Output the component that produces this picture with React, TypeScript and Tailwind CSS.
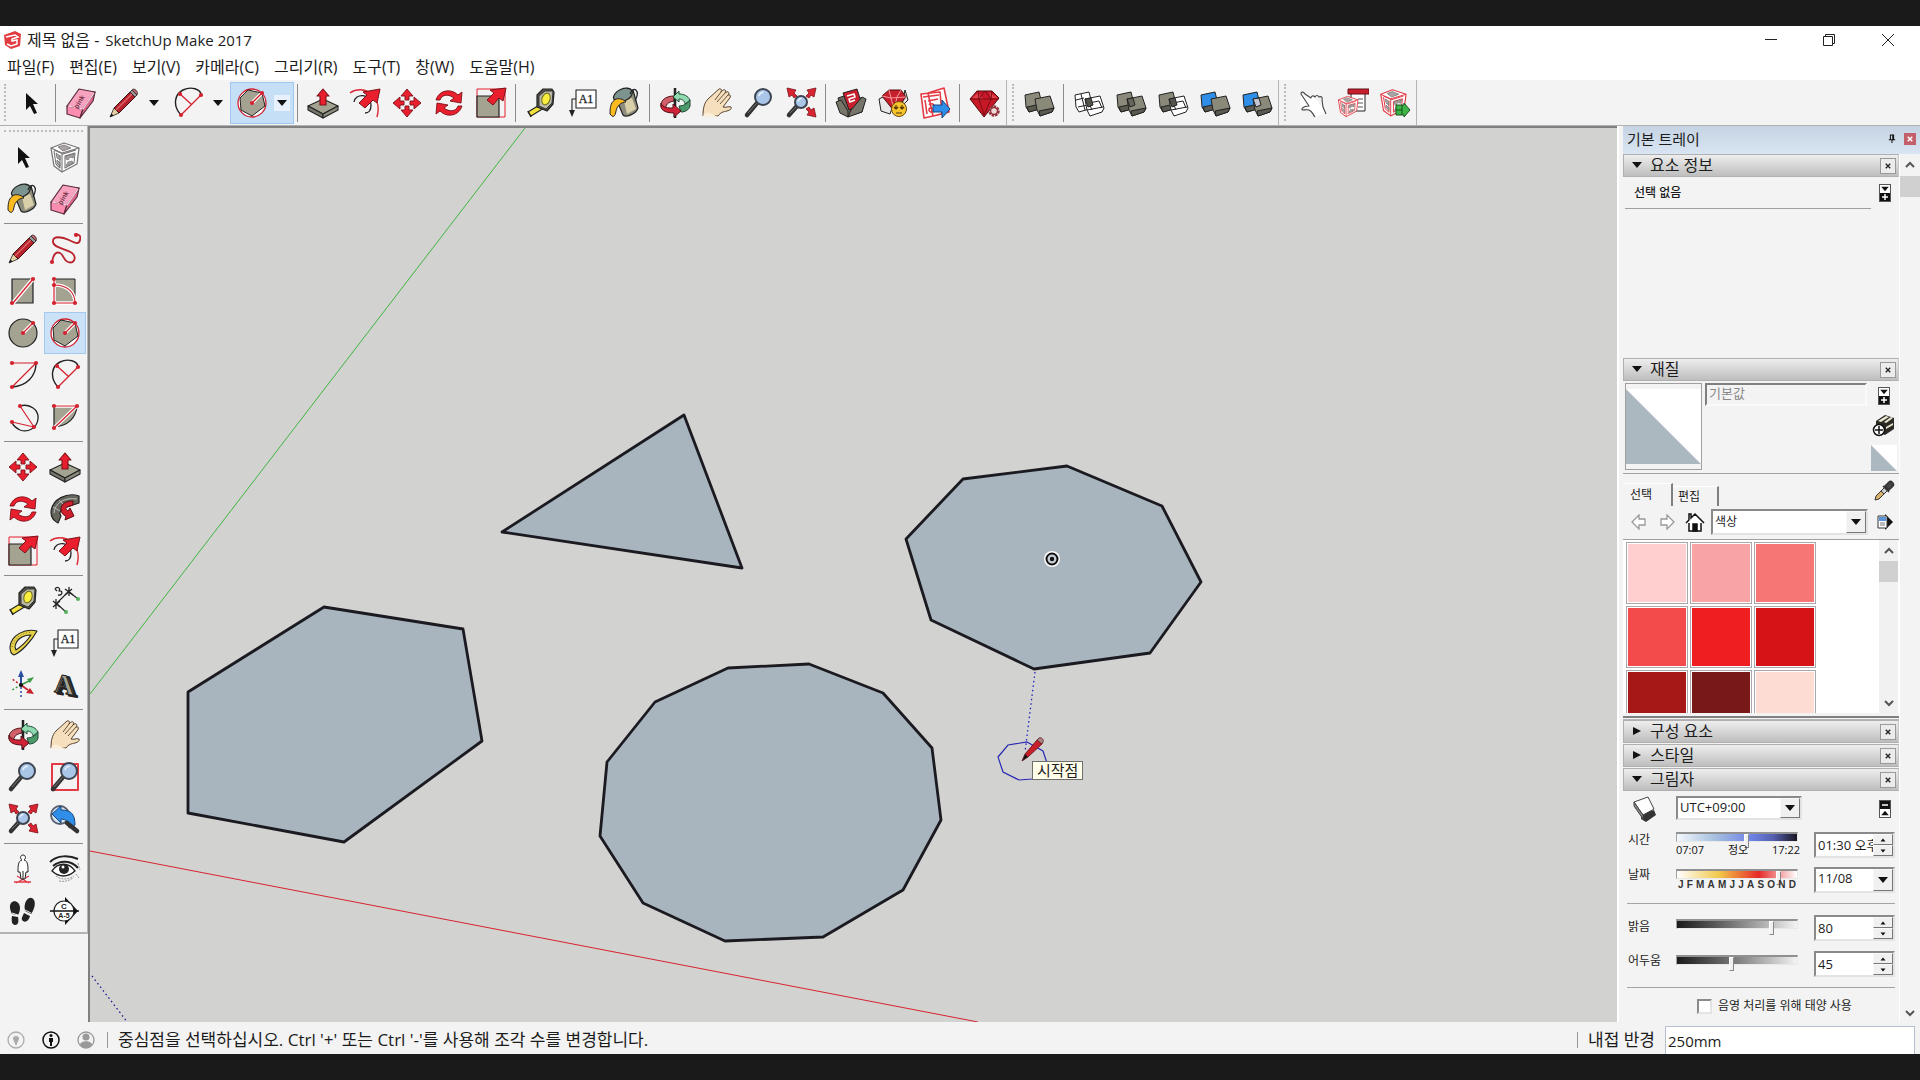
import { ReactNode, useState } from 'react'

const STONE = '#a4a392'
const SOLID = '#8b897a'
const RED = '#ea1f2e'
const INK = '#222222'

function Svg({ children, size = 32 }: { children: ReactNode; size?: number }) {
  return (
    <svg
      viewBox="0 0 32 32"
      width={size}
      height={size}
      fill="none"
      strokeLinejoin="round"
      className="shrink-0"
      aria-hidden="true"
    >
      {children}
    </svg>
  )
}

// little red handles used by the drawing tools
function Dots({ at }: { at: [number, number][] }) {
  return (
    <>
      {at.map(([x, y]) => (
        <circle key={`${x}-${y}`} cx={x} cy={y} r="2.1" fill="#d3222f" />
      ))}
    </>
  )
}

function Lens({ cx = 20, cy = 10, r = 8 }: { cx?: number; cy?: number; r?: number }) {
  return (
    <>
      <path d={`M4 28L${cx - r * 0.7} ${cy + r * 0.7}`} stroke="#333" strokeWidth="4.5" strokeLinecap="round" />
      <path d={`M5 26L${cx - r * 0.8} ${cy + r * 0.8}`} stroke="#777" strokeWidth="1" />
      <circle cx={cx} cy={cy} r={r} fill="#a9c6e8" stroke="#3d4450" strokeWidth="2" />
      <path d={`M${cx - r * 0.5} ${cy - r * 0.1}a${r * 0.6} ${r * 0.6} 0 0 1 ${r * 0.6} ${-r * 0.5}`} stroke="#e6f1fb" strokeWidth="1.5" />
    </>
  )
}

function Blocks({ back, front, wireBack, wireFront, core }: {
  back?: string
  front?: string
  wireBack?: boolean
  wireFront?: boolean
  core?: string
}) {
  return (
    <Svg>
      <g stroke={INK} strokeWidth="1">
        <path d="M2 8l14-3 3 12-3 5-10 3-3-5z" fill={wireBack ? '#fff' : back} />
        {!wireBack && <path d="M4 20l2 5 11-3 1-5z" fill="#5b5a50" />}
        {wireBack && <path d="M5 20l14-3M8 7l4 16M3 13l8-2" />}
        <path d="M12 12l15-3 4 12-2 4-12 4-3-6z" fill={wireFront ? '#fff' : front} />
        {!wireFront && <path d="M16 24l15-3-2 4-12 4z" fill="#5b5a50" />}
        {wireFront && <path d="M14 23l16-3M16 16l10-2 3 7M16 16l3 7" />}
        {core && <path d="M12 12l6-1 2 7-5 2z" fill={core} />}
      </g>
    </Svg>
  )
}

const Cube = ({ color }: { color: string }) => (
  <>
    <path fill="#fff" stroke={color} strokeWidth="1.3" d="M2 7L15 2l15 5-2 16-15 8L5 25z" />
    <path stroke={color} strokeWidth="1.1" d="M2 7l11 5 17-5M13 12v19M5 9l9 4 13-4M5 10l2 13 4 4V14M16 15l10-3-1 10-9 5z" />
    <path fill="#aaa5a3" stroke="#666" strokeWidth=".7" d="M7 12l4 3v4l-3-2zM17 15l8-2-1 4-3-1-2 3-2-1zM17 25l2-4 4-1 1 2zM8 19l3 3v3l-3-3zM9 6l6-2 7 3-8 3z" />
  </>
)

const Arrow45 = () => (
  <path d="M31 2l-3 14-4-3-8 8-6-5 8-8-4-3z" fill={RED} stroke="#7b1118" strokeWidth="1" />
)

const icons: Record<string, ReactNode> = {
  select: (
    <Svg><path fill="#111" d="M11 6v17l4-4 4 8 3-1-4-9h5z" /></Svg>
  ),
  eraser: (
    <Svg>
      <g stroke="#5b2a38" strokeWidth="1.2">
        <path fill="#f7a3c0" d="M14 2l16 3-12 17L2 19z" />
        <path fill="#fb8db0" d="M2 19l16 3-3 9-13-4z" />
        <path fill="#e0698f" d="M30 5l-2 9-13 17 3-9z" />
      </g>
      <path stroke="#fde3ec" strokeWidth="1.2" d="M3 19l15 3L29 6" />
      <text x="8" y="18" fontSize="7" fontWeight="700" fill="#7a3048" transform="rotate(-58 14 16)" fontFamily="Liberation Sans">pink</text>
    </Svg>
  ),
  pencil: (
    <Svg>
      <path d="M2 30l4-9 5 5z" fill="#e5cfa5" stroke={INK} strokeWidth=".8" />
      <path d="M2 30l1.500-3.500 2 2z" fill="#111" />
      <path d="M6 21L22 5l5 5-16 16z" fill="#b8222c" stroke="#3a1113" strokeWidth="1" />
      <path d="M8 23L24 7" stroke="#dd6a6a" strokeWidth="1.2" />
      <path d="M22 5l2-2 5 5-2 2z" fill="#999" stroke={INK} strokeWidth=".8" />
      <path d="M24 3c2-3 7 2 5 5z" fill="#c46a70" stroke={INK} strokeWidth=".8" />
    </Svg>
  ),
  arc2: (
    <Svg>
      <path d="M9 28C0 18 3 7 11 3s18-1 18 5" stroke={INK} strokeWidth="1.4" />
      <path d="M9 28L29 8M8 7l11 10" stroke="#d3222f" strokeWidth="1.3" />
      <Dots at={[[8, 7], [29, 8], [9, 28]]} />
    </Svg>
  ),
  polygon: (
    <Svg>
      <circle cx="16" cy="16" r="14" fill="#fff" stroke="#d3222f" strokeWidth="1.3" />
      <path d="M12 3l14 3 3 13-13 10-11-6-1-12z" fill={STONE} stroke={INK} strokeWidth="1" />
      <path d="M16 16L26 6" stroke="#fff" strokeWidth="3.500" />
      <path d="M16 16L26 6" stroke="#d3222f" strokeWidth="1.3" />
      <Dots at={[[16, 16], [26, 6]]} />
    </Svg>
  ),
  freehand: (
    <Svg>
      <path d="M3 29c1-7 4-11 8-9s3 7 8 9 9-3 5-8S5 16 4 9s10-5 16-2 10 5 11 0-1-5-4-6" stroke="#b9222c" strokeWidth="1.8" />
      <Dots at={[[3, 29], [27, 2]]} />
    </Svg>
  ),
  rect: (
    <Svg>
      <path d="M5 4h21v24H5z" fill={STONE} stroke={INK} strokeWidth="1.2" />
      <path d="M6 28L26 4" stroke="#fff" strokeWidth="4" />
      <path d="M6 28L26 4" stroke="#d3222f" strokeWidth="1.3" />
      <Dots at={[[5, 28], [26, 4]]} />
    </Svg>
  ),
  rotRect: (
    <Svg>
      <path d="M5 4h21v24H5z" fill={STONE} stroke={INK} strokeWidth="1" />
      <path d="M5 4v24h21C26 17 18 10 5 10" stroke="#fff" strokeWidth="3.500" />
      <path d="M5 4v24h21C26 17 18 10 5 10" stroke="#d3222f" strokeWidth="1.2" />
      <Dots at={[[5, 4], [5, 10], [5, 28], [26, 28]]} />
    </Svg>
  ),
  circle: (
    <Svg>
      <circle cx="16" cy="16" r="14" fill={STONE} stroke={INK} strokeWidth="1.2" />
      <path d="M16 16L26 6" stroke="#fff" strokeWidth="3.500" />
      <path d="M16 16L26 6" stroke="#d3222f" strokeWidth="1.3" />
      <Dots at={[[16, 16], [26, 6]]} />
    </Svg>
  ),
  arc: (
    <Svg>
      <path d="M29 4c0 13-9 23-24 24" stroke={INK} strokeWidth="1.4" />
      <path d="M5 4h24L5 28" stroke="#d3222f" strokeWidth="1.2" />
      <Dots at={[[5, 4], [29, 4], [5, 28]]} />
    </Svg>
  ),
  arc3: (
    <Svg>
      <path d="M13 5c10-3 19 4 18 13S21 32 13 29c-4-2-7-4-8-8" stroke={INK} strokeWidth="1.3" />
      <path d="M13 5l14 21L5 21" stroke="#d3222f" strokeWidth="1.2" />
      <Dots at={[[13, 5], [5, 21], [27, 26]]} />
    </Svg>
  ),
  pie: (
    <Svg>
      <path d="M5 5h23c-1 12-9 20-23 21z" fill={STONE} stroke={INK} strokeWidth="1.2" />
      <path d="M5 5h23L5 27" stroke="#fff" strokeWidth="3.500" />
      <path d="M5 5h23L5 27" stroke="#d3222f" strokeWidth="1.2" />
      <Dots at={[[5, 5], [28, 5], [5, 27]]} />
    </Svg>
  ),
  move: (
    <Svg>
      <path
        fill={RED}
        stroke="#7b1118"
        strokeWidth=".9"
        d="M16 2l6 7h-4v4h-4V9h-4zM16 30l-6-7h4v-4h4v4h4zM2 16l7-6v4h4v4H9v4zM30 16l-7 6v-4h-4v-4h4v-4z"
      />
    </Svg>
  ),
  push: (
    <Svg>
      <g stroke={INK} strokeWidth="1.1">
        <path fill={STONE} d="M1 19l15-7 15 7-15 8z" />
        <path fill="#77766a" d="M1 19v4l15 8v-4z" />
        <path fill="#8d8c7e" d="M31 19v4l-15 8v-4z" />
        <path fill={RED} stroke="#7b1118" d="M16 2l6 7h-3v9h-6V9h-3z" />
      </g>
    </Svg>
  ),
  rotate: (
    <Svg>
      <g fill={RED} stroke="#7b1118" strokeWidth=".9">
        <path d="M3 13C6 3 18 1 25 8l4-3-1 11-11-2 4-3C16 7 9 7 7 13z" />
        <path d="M29 19c-3 10-15 12-22 5l-4 3 1-11 11 2-4 3c5 4 12 4 14-2z" />
      </g>
    </Svg>
  ),
  followMe: (
    <Svg>
      <path fill="#66655c" stroke={INK} strokeWidth="1.2" d="M30 3C18-1 3 6 2 19c0 6 3 9 7 11l3-7c-2-3-1-6 3-8l15-5z" />
      <path stroke="#bbb" strokeWidth="1" d="M5 20C6 10 15 4 28 6M10 7l5 5M4 14l7 4" />
      <path fill="#d31f2d" stroke="#5d0d12" strokeWidth="1" d="M24 8c-7 0-12 3-12 8 0 4 2 6 5 7l-1 4 9-4-4-8-2 3c-2-1-3-3-1-4l6-2z" />
    </Svg>
  ),
  scale: (
    <Svg>
      <path d="M2 2h28v28H2z" stroke={RED} strokeWidth="1" />
      <path d="M2 9h22v21H2z" fill={STONE} stroke={INK} strokeWidth="1.2" />
      <path d="M31 1l-3 13-4-3-6 7-6-5 7-7-4-3z" fill={RED} stroke="#7b1118" strokeWidth="1" />
    </Svg>
  ),
  offset: (
    <Svg>
      <path d="M1 6C14-3 34 8 28 30" stroke="#dd2b38" strokeWidth="1.5" />
      <path d="M5 15c1-9 17-9 17 3 0 5-2 8-6 8" stroke={INK} strokeWidth="1.3" />
      <Arrow45 />
    </Svg>
  ),
  tape: (
    <Svg>
      <path fill="#f4e23c" stroke={INK} strokeWidth="1.1" d="M3 25l13-8 3 4-13 8z" />
      <path stroke={INK} strokeWidth="1.4" d="M3 24l3 6" />
      <path fill="#55544a" stroke={INK} strokeWidth="1.2" d="M12 8l6-6h9l2 3-1 12-6 7-10-4z" />
      <path fill="#b9b8a9" stroke={INK} strokeWidth=".8" d="M14 9l6-5h8l-1 12-6 6-7-3z" />
      <ellipse cx="21" cy="12" rx="4" ry="6" transform="rotate(18 21 12)" fill="#f9ee3d" stroke="#6e6a1e" />
    </Svg>
  ),
  dimension: (
    <Svg>
      <path d="M7 19L20 6M7 18l10 9M19 6l10 8" stroke={INK} strokeWidth="1.1" />
      <path d="M4 16l7 6M11 16l-7 6M7 14v10M16 4l8 6M23 4l-7 6M20 2v9" stroke={INK} strokeWidth="1.3" />
      <path d="M6 4c2-3 6-1 4 2 4-1 4 5-1 4M6 4l2 2" stroke={INK} strokeWidth="1.300" />
      <circle cx="29" cy="14" r="2" fill="#55b35d" />
      <circle cx="17" cy="27" r="2" fill="#55b35d" />
    </Svg>
  ),
  protractor: (
    <Svg>
      <path fill="#e6d34a" fillRule="evenodd" stroke={INK} strokeWidth="1.1" d="M30 4C18 1 4 8 3 20c0 4 1 7 4 8 7-3 17-13 23-24zM24 8C16 8 9 12 8 20l1 3c6-4 11-9 15-15z" />
      <path stroke="#6e6414" strokeWidth=".9" d="M5 20C6 12 14 6 25 5" strokeDasharray="1 2" />
    </Svg>
  ),
  text: (
    <Svg>
      <path d="M9 3h20v18H9z" fill="#fff" stroke={INK} strokeWidth="1.1" />
      <text x="19" y="16" fontSize="12" textAnchor="middle" fill={INK} stroke={INK} strokeWidth=".3" fontFamily="Liberation Serif">A1</text>
      <path d="M9 12H5v12" stroke={INK} strokeWidth="1.1" />
      <path d="M2 23h6l-3 7z" fill={INK} />
    </Svg>
  ),
  axes: (
    <Svg>
      <path d="M14 16V7" stroke="#2a4fa0" strokeWidth="2" />
      <path d="M14 1l3 7h-6z" fill="#2a4fa0" />
      <path d="M14 18v10" stroke="#2a4fa0" strokeWidth="1.5" strokeDasharray="2 2" />
      <path d="M14 16l8-4" stroke="#3c9a45" strokeWidth="1.6" />
      <path d="M27 8l-4 6-3-4z" fill="#3c9a45" />
      <path d="M14 16l-9 5" stroke="#3c9a45" strokeWidth="1.500" strokeDasharray="2 2" />
      <path d="M14 16l7 5" stroke="#c9202c" strokeWidth="1.600" />
      <path d="M27 25l-8-1 4-5z" fill="#c9202c" />
      <path d="M14 16l-9-6" stroke="#c9202c" strokeWidth="1.500" strokeDasharray="2 2" />
      <circle cx="14" cy="16" r="2" fill="#111" />
    </Svg>
  ),
  text3d: (
    <Svg>
      <g fontFamily="Liberation Serif" fontWeight="700" fontSize="28" transform="skewY(10)">
        <text x="8" y="23" fill="#44433c" stroke={INK} strokeWidth="2">A</text>
        <text x="5" y="22" fill={STONE} stroke={INK} strokeWidth="1">A</text>
      </g>
    </Svg>
  ),
  orbit: (
    <Svg>
      <path d="M15 9C6 9 1 14 2 20l5 2c-1-4 2-7 8-8z" fill="#d0606a" stroke="#571319" strokeWidth="1" />
      <path d="M16 1v30" stroke={INK} strokeWidth="2.500" />
      <path d="M31 13c-2-4-6-6-11-6V4l-6 6 6 5v-3c4 0 6 3 6 5z" fill="#8fd8b0" stroke="#1e4b33" strokeWidth="1" />
      <path d="M31 13v6c-1 4-5 6-9 6l-2-6c4 0 9-2 11-6z" fill="#4c9a6c" stroke="#1e4b33" strokeWidth="1" />
      <path d="M2 16c2 5 7 5 12 5v-4l8 7-7 6v-4C8 26 2 24 2 19z" fill="#cf2437" stroke="#571319" strokeWidth="1" />
    </Svg>
  ),
  hand: (
    <Svg>
      <path fill="#f6dfbd" stroke="#55412c" strokeWidth="1" d="M2 29c0-7 1-13 5-17L18 2c2-1 3 1 2 3 3-4 6-2 4 1 3-3 5 0 3 2 3-1 3 2 1 4l-6 8c3 1 5-1 8 0 1 2-1 3-4 4-4 1-6 1-9 5z" />
      <path fill="#fbeeda" d="M2 30c0-4 4-6 9-3l6 3z" />
      <path stroke="#55412c" strokeWidth=".9" d="M20 5l-6 8M24 6l-8 9M27 8l-8 9" />
    </Svg>
  ),
  zoom: <Svg><Lens /></Svg>,
  zoomWindow: (
    <Svg>
      <path d="M3 3h26v26H3z" stroke="#e33a45" strokeWidth="2" />
      <Lens />
    </Svg>
  ),
  zoomExtents: (
    <Svg>
      <Lens cx={16} cy={15} r={6} />
      <g fill="#d92431" stroke="#7b1118" strokeWidth=".8">
        <path d="M2 1l9 2-2 3 3 3-3 2-2-3-3 2z" />
        <path d="M31 1l-9 2 2 3-3 3 3 2 2-3 3 2z" />
        <path d="M31 30l-9-2 2-3-3-3 3-2 2 3 3-2z" />
      </g>
    </Svg>
  ),
  previous: (
    <Svg>
      <circle cx="11" cy="12" r="9" fill="#d6e3f1" stroke="#56606e" strokeWidth="1.8" />
      <path fill="#2f8fe8" stroke="#16457b" strokeWidth="1" d="M3 11l9-8v4c10 0 14 4 14 15l-6 3c0-6-3-9-8-9v4z" />
      <path d="M18 20l10 8" stroke="#333" strokeWidth="4.500" strokeLinecap="round" />
    </Svg>
  ),
  person: (
    <Svg>
      <path d="M10 23l12 7M22 23L9 30M7 29h17" stroke="#e33a45" strokeWidth="1.3" />
      <path fill="#fff" stroke={INK} strokeWidth="1" d="M16 2c3 0 3 4 1 5 4 1 4 6 4 12h-2l-1 7h-4l-1-7h-2c0-6 0-11 4-12-2-1-2-5 1-5zM16 18v8" />
    </Svg>
  ),
  eye: (
    <Svg>
      <path d="M1 9C8 2 20 2 29 6M4 13c7-6 18-6 25 2" stroke={INK} strokeWidth="2" />
      <path d="M3 18c6-9 17-9 23 0-7 6-15 7-23 0z" fill="#fff" stroke={INK} strokeWidth="1.4" />
      <circle cx="15" cy="16" r="5" fill="#222" />
      <circle cx="14" cy="14" r="1.500" fill="#fff" />
      <path d="M7 23c5 4 12 4 18 0M10 28c5 1 10 0 14-3M29 10l2 7M27 21l3 4" stroke="#999" strokeWidth="1" strokeDasharray="2 1" />
    </Svg>
  ),
  walk: (
    <Svg>
      <g fill="#222">
        <path d="M4 8c3-4 9-1 9 5 0 3-1 5-2 7l-6-1C3 15 2 11 4 8z" />
        <path d="M5 21l6 1c1 5 0 8-3 8s-4-4-3-9z" />
        <path d="M27 5c-3-5-8-1-9 4-1 3 0 5 0 7l6 3c3-4 5-10 3-14z" />
        <path d="M17 18l6 3c-1 4-4 7-7 5s0-5 1-8z" />
      </g>
      <path d="M5 18l6 2M18 15l6 3" stroke="#eee" strokeWidth="1" />
    </Svg>
  ),
  section: (
    <Svg>
      <path d="M16 2l13 14-13 14z" fill="#111" />
      <circle cx="15" cy="16" r="10" fill="#fff" stroke={INK} strokeWidth="1.2" />
      <path d="M1 16h29" stroke="#111" strokeWidth="1.500" />
      <text x="15" y="14" fontSize="8" fontWeight="700" textAnchor="middle" fill={INK} fontFamily="Liberation Sans">C</text>
      <text x="15" y="23" fontSize="7" fontWeight="700" textAnchor="middle" fill={INK} fontFamily="Liberation Sans">A-5</text>
    </Svg>
  ),
  paint: (
    <Svg>
      <path fill="#8f8d7c" stroke={INK} strokeWidth="1.2" d="M6 9l18-6 5 18c-2 6-12 10-15 7z" />
      <path fill="#d9cfa9" d="M15 14l8-3 4 11-9 5z" />
      <ellipse cx="14" cy="8" rx="10" ry="6" transform="rotate(-24 14 8)" fill="#7d938f" stroke={INK} strokeWidth="1.3" />
      <path d="M21 7c3-9 11-4 5 7" stroke={INK} strokeWidth="1.2" />
      <path fill="#fdbb1f" stroke={INK} strokeWidth="1" d="M7 12c5-1 8 1 10 3-5 0-9 4-10 9-1 6-3 7-6 3 0-8 1-12 6-15z" />
    </Svg>
  ),
  sheet: <Svg><Cube color="#777" /></Svg>,
  warehouse: (
    <Svg>
      <g stroke={INK} strokeWidth="1">
        <path fill="#6c6a60" d="M3 11l9-3 18 4-3 13-14 4-7-6z" />
        <path fill="#c81f2c" d="M8 6l14-4 5 16-13 5z" />
        <path fill="#77756a" d="M1 15l5-2 7 11v6l-8-4zM31 12l-4-2-11 13-3 7 14-5z" />
      </g>
      <path d="M12 9l7-2 1 3-6 2 1 3 5-2" stroke="#fff" strokeWidth="1.600" />
    </Svg>
  ),
  extensions: (
    <Svg>
      <path fill="#e8e8e8" stroke={INK} d="M2 12l6-3 8 9-3 9-9-3zM28 3l3 10-6 6z" />
      <path fill="#c81f2c" stroke="#500d11" d="M5 9l7-6h12l5 7-12 14z" />
      <path stroke="#f59a9f" d="M5 9l9 2 15-1M12 3l2 8 3 12M24 3l-4 7-3 13" />
      <circle cx="22" cy="22" r="7.500" fill="#f8c42c" stroke="#6b4a09" />
      <path d="M19 18v4l-2-2M19 22l2-2M25 18v4l-2-2M25 22l2-2M19 26h6" stroke="#4d3506" strokeWidth="1.200" />
    </Svg>
  ),
  layout: (
    <Svg>
      <path fill="#fff" stroke="#e33a45" strokeWidth="1.600" d="M9 6l16-5 5 24-16 4zM2 7l19-2 2 22-18 4z" />
      <path d="M4 10l16-2M9 14l10-2M6 13l2 14M10 18c4-4 8 3 5 6s-7-1-4-3l4 1" stroke="#e33a45" strokeWidth="1.600" />
      <path fill="#2f8fe8" stroke="#16457b" d="M14 18h9v-5l8 9-8 9v-6h-9z" />
    </Svg>
  ),
  ruby: (
    <Svg>
      <path fill="#c81826" stroke="#500d11" d="M1 12l7-8h15l7 7-15 19z" />
      <path fill="#e4434d" d="M3 11l6-5 5 6zM20 5l2 6h7z" />
      <path stroke="#700d15" d="M1 12h29M9 4l1 8 5 16M23 4l-1 8-7 16M10 12l6-8 6 8" strokeWidth=".9" />
      <circle cx="25" cy="24" r="4.500" fill="#f1d9da" stroke="#93343b" strokeWidth="2.500" strokeDasharray="2.400 1" />
      <circle cx="25" cy="24" r="3.500" stroke="#93343b" strokeWidth="1.500" />
    </Svg>
  ),
  pointHand: (
    <Svg>
      <path fill="#fff" d="M6 6l6 5 5-3 10 12 3 6-10 4-6-8-9-2z" />
      <path stroke="#444" strokeWidth="1.100" d="M20 30c-3-4-3-6-6-7s-8 1-7-1 4-3 7-3L6 7c0-3 3-2 4 0l6 4c0-2 2-3 4-1 1-2 3-2 4 0 2-1 4 0 3 3l1 7 3 7" />
    </Svg>
  ),
  modelInfo: (
    <Svg>
      <path fill="#fff" stroke={INK} d="M14 6h14v18H14z" />
      <path fill="#c8202b" stroke="#66101a" d="M11 2h21v5H11z" />
      <path stroke="#555" d="M21 12h5M21 16h5M21 20h5" />
      <g transform="translate(0 8) scale(.7)"><Cube color="#e33a45" /></g>
    </Svg>
  ),
  modelRun: (
    <Svg>
      <g transform="translate(0 1) scale(.9)"><Cube color="#e33a45" /></g>
      <path fill="#3fb548" stroke="#14531a" d="M17 18h8v-2l6 7-6 7v-2h-8z" />
      <path stroke="#14531a" d="M17 23h6M23 18v10" />
    </Svg>
  ),
  solidOuter: <Blocks back={SOLID} front={SOLID} />,
  solidIntersect: <Blocks wireBack wireFront core="#55544c" />,
  solidUnion: <Blocks back={SOLID} front={SOLID} core="#66655b" />,
  solidSubtract: <Blocks back={SOLID} wireFront core="#55544c" />,
  solidTrim: <Blocks back="#2f8fe8" front={SOLID} />,
  solidSplit: <Blocks back="#2f8fe8" front={SOLID} core="#c5c5cf" />,
}

const menus = ['파일(F)', '편집(E)', '보기(V)', '카메라(C)', '그리기(R)', '도구(T)', '창(W)', '도움말(H)']

// '|' is a divider, '+' after a name adds a drop-down arrow
const toolbars: string[][] = [
  [
    'select', '|', 'eraser', 'pencil+', 'arc2+', 'polygon+', '|', 'push', 'offset', 'move', 'rotate', 'scale', '|',
    'tape', 'text', 'paint', '|', 'orbit', 'hand', 'zoom', 'zoomExtents', '|', 'warehouse', 'extensions', 'layout', '|', 'ruby',
  ],
  ['solidOuter', '|', 'solidIntersect', 'solidUnion', 'solidSubtract', 'solidTrim', 'solidSplit'],
  ['pointHand', 'modelInfo', 'modelRun'],
]

const palette: string[][] = [
  ['select', 'sheet', 'paint', 'eraser'],
  ['pencil', 'freehand', 'rect', 'rotRect', 'circle', 'polygon', 'arc', 'arc2', 'arc3', 'pie'],
  ['move', 'push', 'rotate', 'followMe', 'scale', 'offset'],
  ['tape', 'dimension', 'protractor', 'text', 'axes', 'text3d'],
  ['orbit', 'hand', 'zoom', 'zoomWindow', 'zoomExtents', 'previous'],
  ['person', 'eye', 'walk', 'section'],
]

const swatches = ['#ffcfd0', '#f9a4a4', '#f67676', '#f34a4b', '#ef1e21', '#d61417', '#a61718', '#781819', '#fcdcd3']

function Caret({ dir = 'down', className = '' }: { dir?: 'down' | 'up' | 'right'; className?: string }) {
  const d = { down: 'M0 1h10L5 7z', up: 'M0 7h10L5 1z', right: 'M1 0l8 4-8 4z' }[dir]
  return (
    <svg viewBox="0 0 10 8" className={`fill-[#111] ${className}`} aria-hidden="true">
      <path d={d} />
    </svg>
  )
}

function Chevron({ up }: { up?: boolean }) {
  return (
    <svg viewBox="0 0 10 8" className="h-2 w-2.5" fill="none" stroke="#555" strokeWidth="2" aria-hidden="true">
      <path d={up ? 'M1 6l4-4 4 4' : 'M1 2l4 4 4-4'} />
    </svg>
  )
}

function Toolbar({ items }: { items: string[] }) {
  return (
    <div className="mr-px flex items-center border-r border-[#b4b4b4] pl-2.5 relative">
      <div className="absolute left-1 top-1 bottom-1 border-l-2 border-dotted border-[#bdbdbd]" />
      {items.map((item, i) => {
        if (item === '|') return <div key={i} className="mx-[3px] h-[38px] w-0.5 border-l border-[#8c8c8c]" />
        const hasMenu = item.endsWith('+')
        const name = item.replace('+', '')
        if (!hasMenu) {
          return (
            <button key={i} type="button" aria-label={name} className="flex h-10 w-[42px] items-center justify-center">
              {icons[name]}
            </button>
          )
        }
        const active = name === 'polygon'
        return (
          <div key={i} className={`flex h-[42px] w-16 items-center ${active ? 'bg-[#c5dff7] outline outline-[#9ec8ef] -outline-offset-1' : ''}`}>
            <button type="button" aria-label={name} className="flex h-10 w-11 items-center justify-center">
              {icons[name]}
            </button>
            <button type="button" aria-label={`${name} menu`} className={`flex h-4 w-4 items-center justify-center ${active ? 'bg-[#e8f1fb]' : ''}`}>
              <Caret className="h-2 w-2.5" />
            </button>
          </div>
        )
      })}
    </div>
  )
}

function Viewport() {
  return (
    <main className="relative min-w-0 flex-1 overflow-hidden border-l-2 border-t-2 border-[#808080] bg-[#d2d2d0]">
      <svg className="absolute inset-0 h-full w-full" fill="none" aria-hidden="true">
        <g transform="translate(-90 -128)">
          <path d="M525 128L90 694" stroke="#3fb53f" />
          <path d="M90 851l888 171" stroke="#d8232f" />
          <path d="M92 976l36 47" stroke="#1c1c90" strokeWidth="1.300" strokeDasharray="1.500 3" />
          <g fill="#a8b5be" stroke="#1b1a20" strokeWidth="2.800" strokeLinejoin="round">
            <path d="M684 415l58 153-240-36z" />
            <path d="M324 607l139 22 19 112-138 101-156-29V692z" />
            <path d="M728 668l81-4 74 29 49 55 9 72-38 70-80 47-98 4-82-38-43-67 7-74 48-60z" />
            <path d="M963 479l104-13 95 40 39 76-51 71-116 16-103-49-25-81z" />
          </g>
          <circle cx="1052" cy="559" r="8" fill="#fff" />
          <circle cx="1052" cy="559" r="5.500" fill="#c9d0d5" stroke="#111" strokeWidth="2" />
          <circle cx="1052" cy="559" r="2.200" fill="#111" />
          <path d="M1035 672l-10 80" stroke="#2020c0" strokeWidth="1.300" strokeDasharray="1.500 3" />
          <path d="M1027 742l16 9 4 12-15 16-13 1-16-8-5-15 10-12z" stroke="#2828b4" strokeWidth="1.200" />
          <g strokeWidth=".8" stroke="#5c1218">
            <path d="M1022 761l3-7 3 3z" fill="#111" />
            <path d="M1025 754l12-14 5 4-14 13z" fill="#c8202b" />
            <path d="M1037 740l2-2c3-1 5 2 4 4l-1 2z" fill="#a88" />
          </g>
        </g>
      </svg>
      <div
        role="tooltip"
        className="absolute left-[942px] top-[633px] border border-[#6f6f6f] bg-[#ffffea] px-1 text-[15px] leading-[17px] text-[#222]"
      >
        시작점
      </div>
    </main>
  )
}

function PanelHeader({ title, open = true }: { title: string; open?: boolean }) {
  return (
    <div className="flex h-[23px] shrink-0 items-center border border-[#b0b0b0] border-r-[#c8c8c8] bg-linear-to-b from-[#eeeeee] to-[#bebebe] pl-2">
      <button type="button" aria-expanded={open} className="flex flex-1 items-center gap-2 pb-0.5 text-left text-base leading-5">
        <Caret dir={open ? 'down' : 'right'} className="h-2 w-2.5" />
        {title}
      </button>
      <button type="button" aria-label={`${title} close`} className="mr-0.5 flex size-4 items-center justify-center border border-[#999] bg-[#ececec]">
        <svg viewBox="0 0 8 8" className="size-1.5" stroke="#222" strokeWidth="1.8" aria-hidden="true">
          <path d="M1 1l6 6M7 1L1 7" />
        </svg>
      </button>
    </div>
  )
}

function DetailToggle({ minus }: { minus?: boolean }) {
  return (
    <button type="button" aria-label="details" className={`flex w-3 border border-[#555] ${minus ? 'flex-col-reverse' : 'flex-col'}`}>
      <span className="flex h-2 w-full items-center justify-center bg-white">
        <Caret dir={minus ? 'up' : 'down'} className="h-1.5 w-2" />
      </span>
      <span className="flex h-2 w-full items-center justify-center bg-[#111]">
        <svg viewBox="0 0 6 6" className="size-1.5" stroke="#fff" strokeWidth="1.5" aria-hidden="true">
          <path d={minus ? 'M0 3h6' : 'M0 3h6M3 0v6'} />
        </svg>
      </span>
    </button>
  )
}

const SUNKEN = 'border-2 border-[#e3e3e3] border-t-[#8a8a8a] border-l-[#8a8a8a] bg-white'
const RAISED = 'flex items-center justify-center border border-[#f8f8f8] border-r-[#777] border-b-[#777] bg-[#f0f0f0]'

function Dropdown({ label, options, className, textClass }: {
  label: string
  options: string[]
  className: string
  textClass: string
}) {
  return (
    <div className={`relative ${SUNKEN} ${className}`}>
      <select aria-label={label} className={`block h-full w-full appearance-none bg-transparent ${textClass}`}>
        {options.map((o) => <option key={o}>{o}</option>)}
      </select>
      <span className={`pointer-events-none absolute inset-y-0 right-0 w-5 ${RAISED}`}>
        <Caret className="h-2 w-2.5" />
      </span>
    </div>
  )
}

function Spinner({ id, value, onChange, label }: {
  id: string
  value: string
  onChange: (v: string) => void
  label?: string
}) {
  const step = (n: number) => {
    if (!isNaN(Number(value))) onChange(String(Number(value) + n))
  }
  return (
    <div className={`flex h-[26px] w-[81px] ${SUNKEN}`}>
      <input
        id={id}
        aria-label={label}
        value={value}
        onChange={(e) => onChange(e.target.value)}
        className="min-w-0 flex-1 pl-0.5 text-[13px] leading-4"
      />
      <div className="flex w-5 flex-col">
        <button type="button" aria-label="up" onClick={() => step(1)} className={`flex-1 ${RAISED}`}>
          <Caret dir="up" className="h-1 w-1.5" />
        </button>
        <button type="button" aria-label="down" onClick={() => step(-1)} className={`flex-1 ${RAISED}`}>
          <Caret className="h-1 w-1.5" />
        </button>
      </div>
    </div>
  )
}

const SLIDER =
  'block h-2.5 w-[122px] appearance-none border border-t-2 border-[#e8e8e8] border-t-[#909090] border-l-[#a0a0a0] ' +
  '[&::-webkit-slider-runnable-track]:h-2 [&::-webkit-slider-thumb]:h-3.5 [&::-webkit-slider-thumb]:w-[5px] ' +
  '[&::-webkit-slider-thumb]:appearance-none [&::-webkit-slider-thumb]:border [&::-webkit-slider-thumb]:border-white ' +
  '[&::-webkit-slider-thumb]:border-r-[#888] [&::-webkit-slider-thumb]:border-b-[#888] [&::-webkit-slider-thumb]:bg-[#f0f0f0]'

function MaterialsPanel() {
  return (
    <section>
      <PanelHeader title="재질" />
      <div className="flex h-[93px] border-b border-[#a0a0a0] pl-0.5 pt-0.5">
        <div className="flex h-[87px] w-[77px] items-center border border-[#a0a0a0]">
          <svg viewBox="0 0 75 75" className="h-[75px] w-[75px] bg-white" aria-hidden="true">
            <path d="M0 0l75 75H0z" fill="#abb8c0" />
          </svg>
        </div>
        <input
          aria-label="재질 이름"
          defaultValue="기본값"
          disabled
          className="ml-[3px] h-[23px] w-[162px] border-2 border-[#fafafa] border-l-[#808080] border-t-[#808080] bg-[#f3f3f3] pb-1 pl-0.5 text-[13px] text-[#888]"
        />
        <div className="flex flex-1 flex-col items-center gap-2 pl-px pt-1">
          <DetailToggle />
          <button type="button" aria-label="재질 만들기">
            <svg viewBox="0 0 24 24" className="size-6" aria-hidden="true">
              <path d="M4 8l9-6 9 3v11l-9 6-9-4z" fill="#2b2a24" />
              <path d="M6 8l8-5 3 1-8 5zM12 9l7-5 2 1-7 5zM14 14l7-4v2l-7 4z" fill="#eae7d2" />
              <circle cx="7" cy="17" r="5.500" fill="#fff" stroke="#111" strokeWidth="1.500" />
              <path d="M3 17h8M7 13v8" stroke="#111" strokeWidth="1.500" />
            </svg>
          </button>
          <svg viewBox="0 0 26 26" className="size-[26px] shrink-0 bg-white" aria-hidden="true">
            <path d="M0 0l26 26H0z" fill="#abb8c0" />
          </svg>
        </div>
      </div>

      <div className="flex h-8 items-end text-xs" role="tablist">
        <button type="button" role="tab" aria-selected="true" className="h-[23px] w-[50px] border-r-2 border-t border-[#ffffff] border-r-[#808080] pr-3">
          선택
        </button>
        <button type="button" role="tab" aria-selected="false" className="h-5 w-[46px] border-r-2 border-t border-[#ffffff] border-r-[#808080] pr-3">
          편집
        </button>
        <button type="button" aria-label="스포이드" className="mb-1 ml-auto mr-1">
          <svg viewBox="0 0 22 22" className="size-[22px]" aria-hidden="true">
            <path d="M2 20l1-4L12 7l3 3-9 9z" fill="#d9b26c" stroke="#333" />
            <path d="M8 11l4-4 3 3-4 4z" fill="#ccc" stroke="#333" />
            <path d="M10 6l6 6M12 6l4-4c2-2 6 2 4 4l-4 4z" fill="#444" stroke="#333" strokeWidth="1.500" />
          </svg>
        </button>
      </div>

      <div className="flex h-[34px] items-center border-b border-[#a0a0a0] pb-0.5 pl-2">
        <button type="button" aria-label="뒤로" className="w-7">
          <svg viewBox="0 0 16 16" className="size-4" fill="#fff" stroke="#999" strokeWidth="1.3" aria-hidden="true"><path d="M1 8l7-7v4h6v6H8v4z" /></svg>
        </button>
        <button type="button" aria-label="앞으로" className="w-[26px]">
          <svg viewBox="0 0 16 16" className="size-4" fill="#fff" stroke="#999" strokeWidth="1.3" aria-hidden="true"><path d="M15 8L8 1v4H2v6h6v4z" /></svg>
        </button>
        <button type="button" aria-label="모델에서" className="mr-1.5">
          <svg viewBox="0 0 20 20" className="size-5" fill="#fff" stroke="#111" strokeWidth="1.5" aria-hidden="true">
            <path d="M4 10v9h12v-9" />
            <path d="M1 11l3-3V2h2v4l4-4 9 9" />
            <path d="M8 12h4v7H8z" fill="#111" />
          </svg>
        </button>
        <Dropdown label="재질 라이브러리" options={['색상']} className="h-[26px] w-[157px]" textClass="pl-0.5 text-xs" />
        <button type="button" aria-label="세부 정보" className="ml-2">
          <svg viewBox="0 0 18 18" className="size-[18px]" aria-hidden="true">
            <path d="M9 1l8 8-8 8z" fill="#111" />
            <path d="M2 3h9v12H2z" fill="#fff" stroke="#333" />
            <path d="M3 4h7v4H3z" fill="#5a93d6" />
            <path d="M4 10h5M4 12h5" stroke="#777" />
          </svg>
        </button>
      </div>

      <div className="flex h-[173px] overflow-hidden bg-white">
        <div className="grid flex-1 grid-cols-[62px_62px_62px] content-start gap-0.5 pl-[3px] pt-0.5">
          {swatches.map((color) => (
            <button
              key={color}
              type="button"
              aria-label={color}
              className="h-[62px] border border-[#aaa6a9] p-px"
            >
              <span className="block h-full w-full" style={{ backgroundColor: color }} />
            </button>
          ))}
        </div>
        <div className="mr-px flex w-[19px] flex-col items-center bg-[#f1f1f1]">
          <div className="flex h-[21px] items-center"><Chevron up /></div>
          <div className="h-[21px] w-full bg-[#d0d0d0]" />
          <div className="mt-auto flex h-[21px] items-center"><Chevron /></div>
        </div>
      </div>
      <div className="mt-[3px] h-1 border-b border-t-2 border-[#b5b5b5] border-t-[#808080]" />
    </section>
  )
}

function ShadowsPanel() {
  const [time, setTime] = useState('01:30 오후')
  const [light, setLight] = useState('80')
  const [dark, setDark] = useState('45')

  return (
    <section>
      <PanelHeader title="그림자" />
      <div className="flex h-[41px] items-start pl-2 pt-[5px]">
        <button type="button" aria-label="그림자 표시" className="w-[45px]">
          <svg viewBox="0 0 26 26" className="size-[26px]" aria-hidden="true">
            <path d="M10 18l13-4 2 5-10 7-5-3z" fill="#333" />
            <path d="M3 6l14-5 6 12-11 6z" fill="#fff" stroke="#444" />
            <path d="M3 6v4l9 13v-4z" fill="#888" stroke="#444" />
          </svg>
        </button>
        <Dropdown label="시간대" options={['UTC+09:00']} className="h-6 w-[126px]" textClass="pb-1 pl-0.5 text-[13px]" />
        <div className="ml-auto mr-2 pt-1"><DetailToggle minus /></div>
      </div>

      <div className="grid grid-cols-[48px_138px_1fr] pl-[5px] text-xs">
        <label htmlFor="time" className="leading-4">시간</label>
        <div>
          <input
            id="time"
            type="range"
            defaultValue="58"
            className={`${SLIDER} bg-[linear-gradient(90deg,#f4f8fd,#a9c3e0_30%,#6f83e6_62%,#5560b0_80%,#1a1722)]`}
          />
          <div className="flex w-[124px] justify-between pt-0.5 text-[11px] leading-3 text-[#111]">
            <span>07:07</span><span>정오</span><span>17:22</span>
          </div>
        </div>
        <Spinner id="time-value" label="시간 값" value={time} onChange={setTime} />
      </div>

      <div className="mt-[9px] grid grid-cols-[48px_138px_1fr] pl-[5px] text-xs">
        <label htmlFor="date" className="leading-4">날짜</label>
        <div className="pt-0.5">
          <input
            id="date"
            type="range"
            defaultValue="86"
            className={`${SLIDER} bg-[linear-gradient(90deg,#fff,#f2c84a_35%,#e62a28_68%,#fff)]`}
          />
          <div className="flex w-[120px] justify-between pl-0.5 font-['Liberation_Sans'] text-[10px] font-bold leading-3 text-[#333]">
            {'JFMAMJJASOND'.split('').map((m, i) => <span key={i}>{m}</span>)}
          </div>
        </div>
        <Dropdown label="날짜 값" options={['11/08']} className="h-[26px] w-[81px]" textClass="pb-0.5 pl-0.5 text-[13px]" />
      </div>

      <div className="mx-1 mt-2.5 border-t border-[#a5a5a5]" />

      <div className="mt-[11px] grid grid-cols-[48px_138px_1fr] pl-[5px] text-xs">
        <label htmlFor="light" className="pt-1 leading-4">밝음</label>
        <div className="pt-1">
          <input id="light" type="range" value={light} onChange={(e) => setLight(e.target.value)} className={`${SLIDER} bg-linear-to-r from-[#1c1c1c] to-[#f3f3f3]`} />
        </div>
        <Spinner id="light-value" label="밝음 값" value={light} onChange={setLight} />
      </div>
      <div className="mt-2.5 grid grid-cols-[48px_138px_1fr] pl-[5px] text-xs">
        <label htmlFor="dark" className="pt-0.5 leading-4">어두움</label>
        <div className="pt-1">
          <input id="dark" type="range" value={dark} onChange={(e) => setDark(e.target.value)} className={`${SLIDER} bg-linear-to-r from-[#1c1c1c] to-[#f3f3f3]`} />
        </div>
        <Spinner id="dark-value" label="어두움 값" value={dark} onChange={setDark} />
      </div>

      <div className="mx-1 mt-2.5 border-t border-[#a5a5a5]" />
      <label className="ml-[74px] mt-2.5 flex items-center gap-1.5 text-xs leading-4">
        <input type="checkbox" className={`size-[15px] appearance-none ${SUNKEN}`} />
        음영 처리를 위해 태양 사용
      </label>
    </section>
  )
}

function Tray() {
  return (
    <aside className="flex w-[303px] shrink-0 flex-col border-l-2 border-white bg-[#f3f3f3] pl-1">
      <div className="flex h-7 shrink-0 items-center bg-linear-to-b from-[#c5d3e3] to-[#d9e5f2] pb-0.5 pl-1 text-[15px]">
        <h2 className="flex-1">기본 트레이</h2>
        <button type="button" aria-label="고정" className="mr-2">
          <svg viewBox="0 0 10 12" className="h-2.5 w-2" fill="none" stroke="#111" strokeWidth="1.3" aria-hidden="true">
            <path d="M3 1h4v6H3zM1 7h8M5 7v4M6 1v6" />
          </svg>
        </button>
        <button type="button" aria-label="트레이 닫기" className="mr-1 flex size-3 items-center justify-center bg-[#c4606a]">
          <svg viewBox="0 0 8 8" className="size-1.5" stroke="#fff" strokeWidth="2" aria-hidden="true"><path d="M1 1l6 6M7 1L1 7" /></svg>
        </button>
      </div>

      <div className="flex min-h-0 flex-1">
        <div className="min-w-0 flex-1 overflow-hidden border-r border-white">
          <section className="h-[204px]">
            <PanelHeader title="요소 정보" />
            <div className="flex h-[31px] items-center pl-[11px] pr-2 text-xs font-medium">
              <span className="flex-1">선택 없음</span>
              <DetailToggle />
            </div>
            <div className="ml-0.5 mr-7 border-t border-[#a0a0a0]" />
          </section>
          <MaterialsPanel />
          <div className="flex flex-col gap-px pb-px">
            <PanelHeader title="구성 요소" open={false} />
            <PanelHeader title="스타일" open={false} />
          </div>
          <ShadowsPanel />
        </div>
        <div className="flex w-5 shrink-0 flex-col items-center">
          <div className="flex h-[22px] items-center"><Chevron up /></div>
          <div className="h-[21px] w-full bg-[#d0d0d0]" />
          <div className="mt-auto flex h-[18px] items-center"><Chevron /></div>
        </div>
      </div>
    </aside>
  )
}

function TitleBar() {
  return (
    <header className="flex h-7 shrink-0 items-center bg-white pl-1">
      <svg viewBox="0 0 18 18" className="size-[18px]" aria-hidden="true">
        <path d="M0 4l11-4 6 3-1 12-9 3-6-4z" fill="#e23b40" />
        <path d="M2 6l9-2 3 2-6 2v2l5-1v4l-6 2-4-2" fill="none" stroke="#fff" strokeWidth="1.500" />
      </svg>
      <h1 className="ml-[5px] flex flex-1 items-baseline gap-1.5 text-base">
        제목 없음 - <span className="text-[15px]">SketchUp Make 2017</span>
      </h1>
      <div className="mr-0.5 flex">
        <button type="button" aria-label="최소화" className="flex w-[58px] justify-center">
          <svg viewBox="0 0 14 14" className="size-3.5" stroke="#222" aria-hidden="true"><path d="M1 6.500h12" /></svg>
        </button>
        <button type="button" aria-label="이전 크기로" className="flex w-[58px] justify-center">
          <svg viewBox="0 0 14 14" className="size-3.5" stroke="#222" fill="none" aria-hidden="true"><path d="M1.500 3.500h9v9h-9zM3.500 3.500v-2h9v9h-2" /></svg>
        </button>
        <button type="button" aria-label="닫기" className="flex w-[60px] justify-center">
          <svg viewBox="0 0 14 14" className="size-3.5" stroke="#222" aria-hidden="true"><path d="M1 1l12 12M13 1L1 13" /></svg>
        </button>
      </div>
    </header>
  )
}

function StatusBar() {
  return (
    <footer className="flex h-8 shrink-0 items-center bg-[#f3f3f3] pl-[7px] pt-1">
      <div className="flex gap-[17px]">
        <button type="button" aria-label="위치">
          <svg viewBox="0 0 18 18" className="size-[18px]" fill="none" aria-hidden="true">
            <circle cx="9" cy="9" r="8" stroke="#aaa" strokeWidth="1.300" />
            <path d="M9 15L6 8a3 3 0 1 1 6 0z" fill="#aaa" />
          </svg>
        </button>
        <button type="button" aria-label="크레딧">
          <svg viewBox="0 0 18 18" className="size-[18px]" fill="none" aria-hidden="true">
            <circle cx="9" cy="9" r="8" stroke="#111" strokeWidth="1.500" />
            <path d="M7 7h4v4h-1v4H8v-4H7z" fill="#111" />
            <circle cx="9" cy="4.500" r="1.500" fill="#111" />
          </svg>
        </button>
        <button type="button" aria-label="로그인">
          <svg viewBox="0 0 18 18" className="size-[18px]" fill="none" aria-hidden="true">
            <circle cx="9" cy="9" r="8" stroke="#999" strokeWidth="1.300" />
            <circle cx="9" cy="6" r="3.500" fill="#999" />
            <path d="M3 14c0-5 12-5 12 0-3 4-9 4-12 0z" fill="#999" />
          </svg>
        </button>
      </div>
      <p className="ml-3 flex-1 border-l border-[#999] pl-2.5 text-[17px] leading-4">
        중심점을 선택하십시오. Ctrl '+' 또는 Ctrl '-'를 사용해 조각 수를 변경합니다.
      </p>
      <label htmlFor="measure" className="border-l border-[#999] px-2.5 text-[17px] leading-4">내접 반경</label>
      <input
        id="measure"
        defaultValue="250mm"
        className="mr-[5px] h-7 w-[250px] border border-b-0 border-[#b5bfd0] bg-white pl-0.5 text-[15px]"
      />
    </footer>
  )
}

export default function App() {
  return (
    <div className="flex h-screen flex-col overflow-hidden bg-[#1a1a1a] py-[26px] font-['Open_Sans','Noto_Sans_CJK_KR',sans-serif] text-[#1c1c1c]">
      <TitleBar />
      <nav className="flex h-[26px] shrink-0 items-center gap-[15px] bg-white pb-px pl-[7px] text-base">
        {menus.map((m) => <button key={m} type="button">{m}</button>)}
      </nav>
      <div className="flex h-[46px] shrink-0 border-b border-[#b0b0b0] bg-[#f3f3f3]">
        {toolbars.map((items, i) => <Toolbar key={i} items={items} />)}
      </div>

      <div className="flex min-h-0 flex-1 bg-[#f3f3f3]">
        <div className="w-[88px] shrink-0">
          <div className="border-b-2 border-r border-[#b4b4b4] pt-1">
            <div className="mx-1 mb-1 border-t-2 border-dotted border-[#bdbdbd]" />
            {palette.map((group, i) => (
              <div key={i}>
                {i > 0 && <div className="mx-1 my-[3px] h-0.5 border-t border-[#8c8c8c]" />}
                <div className="grid grid-cols-[42px_42px] pl-0.5">
                  {group.map((name) => (
                    <button
                      key={name}
                      type="button"
                      aria-label={name}
                      className={`flex h-[42px] items-center justify-center ${name === 'polygon' ? 'border border-[#a3c9ee] bg-[#cbe1f7]' : ''}`}
                    >
                      {icons[name]}
                    </button>
                  ))}
                </div>
              </div>
            ))}
          </div>
        </div>
        <Viewport />
        <Tray />
      </div>
      <StatusBar />
    </div>
  )
}
